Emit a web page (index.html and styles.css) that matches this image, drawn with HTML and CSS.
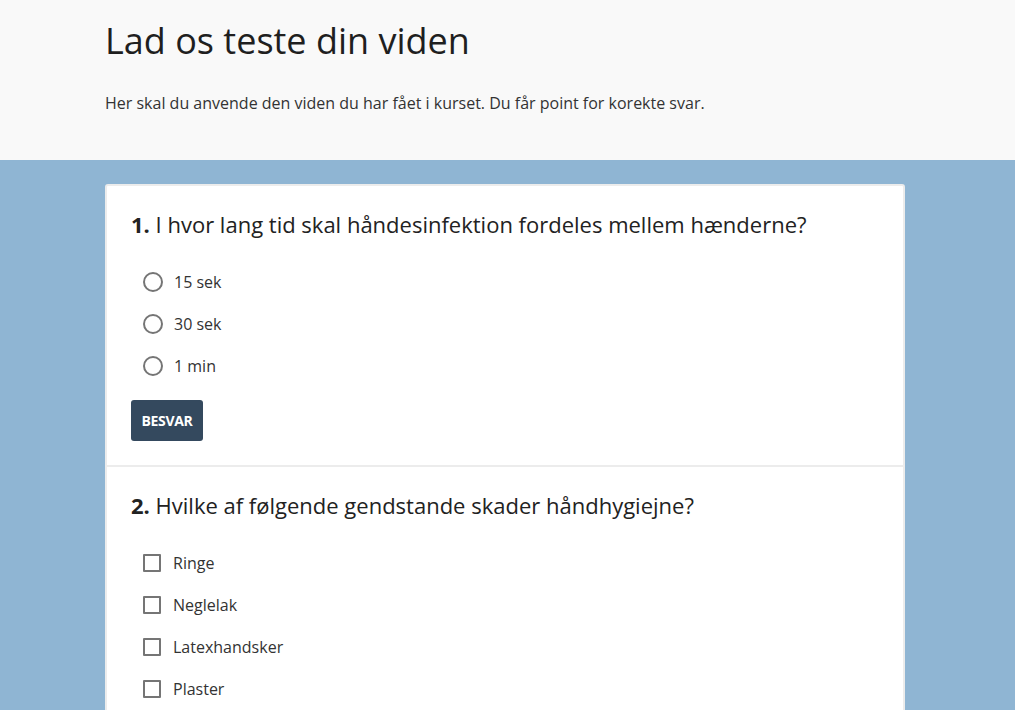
FILE: index.html
```html
<!DOCTYPE html>
<html lang="da">
<head>
<meta charset="utf-8">
<title>Lad os teste din viden</title>
<link rel="stylesheet" href="styles.css">
</head>
<body>
<header class="intro">
  <div class="wrap">
    <h1 class="intro-title">Lad os teste din viden</h1>
    <p class="intro-text">Her skal du anvende den viden du har fået i kurset. Du får point for korekte svar.</p>
  </div>
</header>
<main class="quiz">
  <div class="wrap">
    <div class="card">
      <section class="question">
        <h2 class="q-title"><span class="q-num">1.</span> I hvor lang tid skal håndesinfektion fordeles mellem hænderne?</h2>
        <ul class="options">
          <li class="option"><span class="radio"></span><span class="opt-label">15 sek</span></li>
          <li class="option"><span class="radio"></span><span class="opt-label">30 sek</span></li>
          <li class="option"><span class="radio"></span><span class="opt-label">1 min</span></li>
        </ul>
        <button class="btn">BESVAR</button>
      </section>
      <section class="question">
        <h2 class="q-title"><span class="q-num">2.</span> Hvilke af følgende gendstande skader håndhygiejne?</h2>
        <ul class="options">
          <li class="option"><span class="check"></span><span class="opt-label">Ringe</span></li>
          <li class="option"><span class="check"></span><span class="opt-label">Neglelak</span></li>
          <li class="option"><span class="check"></span><span class="opt-label">Latexhandsker</span></li>
          <li class="option"><span class="check"></span><span class="opt-label">Plaster</span></li>
        </ul>
        <button class="btn">BESVAR</button>
      </section>
    </div>
  </div>
</main>
</body>
</html>
```
FILE: styles.css
```css
html, body {
  margin: 0;
  padding: 0;
}
body {
  font-family: "Open Sans", "Noto Sans", sans-serif;
  color: #222;
  background: #8fb5d3;
}
.wrap {
  width: 800px;
  margin: 0 0 0 105px;
}
.intro {
  background: #f9f9f9;
  height: 160px;
  box-sizing: border-box;
  padding-top: 17px;
}
.intro-title {
  font-size: 36px;
  font-weight: 400;
  line-height: 48px;
  margin: 0;
  color: #1f1f1f;
}
.intro-text {
  font-size: 16px;
  line-height: 22px;
  margin: 27px 0 0;
  color: #333;
}
.quiz {
  padding-top: 24px;
  padding-bottom: 40px;
}
.card {
  background: #fff;
  border: 2px solid #ececec;
  border-radius: 3px;
}
.question {
  padding: 23px 24px 24px;
  border-bottom: 2px solid #ececec;
}
.q-title {
  font-size: 22px;
  font-weight: 400;
  line-height: 30px;
  margin: 0 0 22px;
  color: #222;
}
.q-num {
  font-weight: 700;
}
.options {
  list-style: none;
  margin: 0 0 13px;
  padding: 0 0 0 12px;
}
.option {
  display: flex;
  align-items: center;
  height: 42px;
  font-size: 16px;
  color: #333;
}
.radio {
  width: 16px;
  height: 16px;
  border: 2px solid #757575;
  border-radius: 50%;
  margin-right: 11px;
  flex: none;
}
.check {
  width: 14px;
  height: 14px;
  border: 2px solid #757575;
  border-radius: 1px;
  margin-right: 12px;
  flex: none;
}
.btn {
  font-family: "Open Sans", "Noto Sans", sans-serif;
  font-weight: 700;
  font-size: 14px;
  letter-spacing: -0.3px;
  color: #fff;
  background: #34495e;
  border: none;
  border-radius: 3px;
  width: 72px;
  height: 41px;
  padding: 0;
}
```
